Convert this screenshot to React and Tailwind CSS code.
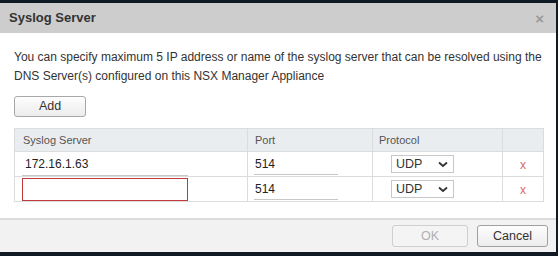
import { useState } from 'react';

const rowsInit = [
  { server: '172.16.1.63', port: '514', protocol: 'UDP' },
  { server: '', port: '514', protocol: 'UDP' },
];

function Row({ row, invalid }) {
  return (
    <tr className="h-[25px] border-t border-[#dcdcdc]">
      <td className="border-r border-[#dcdcdc] pl-[7px] pr-[59px] py-0 align-middle">
        {invalid ? (
          <input
            defaultValue={row.server}
            className="block w-[166px] h-[23px] border border-[#c0393b] px-[3px] text-[12px] outline-none"
          />
        ) : (
          <input
            defaultValue={row.server}
            className="block w-[166px] h-[23px] border-b border-[#c8c8c8] px-[3px] text-[12px] text-[#222] outline-none"
          />
        )}
      </td>
      <td className="border-r border-[#dcdcdc] pl-[6px] align-middle">
        <input
          defaultValue={row.port}
          className="block w-[84px] h-[22px] border-b border-[#c8c8c8] px-[1px] text-[12px] text-[#222] outline-none"
        />
      </td>
      <td className="border-r border-[#dcdcdc] pl-[18px] align-middle">
        <div className="flex items-center justify-between w-[63px] h-[18px] border border-[#c8c8c8] pl-[4px] pr-[5px] text-[12.5px] text-[#333]">
          <span>{row.protocol}</span>
          <svg width="10" height="7" viewBox="0 0 10 7">
            <path d="M1 1.5 L5 5 L9 1.5" fill="none" stroke="#333" strokeWidth="1.8" />
          </svg>
        </div>
      </td>
      <td className="text-center align-middle">
        <span className="text-[12px] text-[#d46a6a]">x</span>
      </td>
    </tr>
  );
}

export default function App() {
  const [rows] = useState(rowsInit);

  return (
    <div className="w-[558px] h-[256px] bg-[#101a24] pt-[3px] pb-[4px] pr-[2px] font-['Liberation_Sans',Arial,sans-serif]">
      <div className="flex flex-col h-full bg-white">
        <div className="flex items-center justify-between h-[30px] bg-[#cdcdcd] pl-[9px] pr-[12px]">
          <span className="text-[13px] font-bold text-[#333]">Syslog Server</span>
          <span className="text-[15px] font-bold text-[#9a9a9a] leading-none">×</span>
        </div>
        <div className="flex-1 px-[14px] pt-[15px]">
          <p className="w-[536px] text-[12px] leading-[19px] text-[#333]">
            You can specify maximum 5 IP address or name of the syslog server that can be resolved using the DNS Server(s) configured on this NSX Manager Appliance
          </p>
          <button className="mt-[10px] w-[72px] h-[21px] rounded-[3px] border border-[#a8a8a8] bg-gradient-to-b from-[#fdfdfd] to-[#ececec] text-[12.5px] text-[#333]">
            Add
          </button>
          <table className="mt-[11px] w-[530px] border border-[#dcdcdc] border-collapse table-fixed">
            <colgroup>
              <col className="w-[233px]" />
              <col className="w-[125px]" />
              <col className="w-[130px]" />
              <col />
            </colgroup>
            <thead>
              <tr className="h-[23px] bg-[#eaedf0] text-left">
                <th className="border-r border-[#dcdcdc] pl-[8px] text-[11px] font-normal text-[#555]">Syslog Server</th>
                <th className="border-r border-[#dcdcdc] pl-[7px] text-[11px] font-normal text-[#555]">Port</th>
                <th className="border-r border-[#dcdcdc] pl-[6px] text-[11px] font-normal text-[#555]">Protocol</th>
                <th />
              </tr>
            </thead>
            <tbody>
              {rows.map((row, i) => (
                <Row key={i} row={row} invalid={row.server === ''} />
              ))}
            </tbody>
          </table>
        </div>
        <div className="flex items-center justify-end gap-[9px] h-[34px] border-t-2 border-[#dcdcdc] bg-[#f2f2f2] pr-[8px]">
          <button className="w-[76px] h-[22px] rounded-[3px] border border-[#cfcfcf] bg-[#f4f4f4] text-[12.5px] text-[#b0b0b0]">
            OK
          </button>
          <button className="w-[71px] h-[22px] rounded-[3px] border border-[#a0a0a0] bg-gradient-to-b from-[#fdfdfd] to-[#ececec] text-[12.5px] text-[#333]">
            Cancel
          </button>
        </div>
      </div>
    </div>
  );
}
